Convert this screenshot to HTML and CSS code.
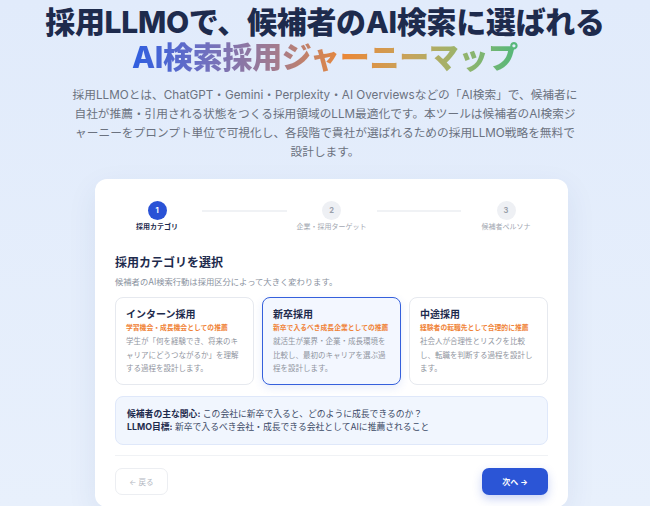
FILE: index.html
```html
<!DOCTYPE html>
<html lang="ja">
<head>
<meta charset="UTF-8">
<meta name="viewport" content="width=device-width, initial-scale=1.0">
<title>AI検索採用ジャーニーマップ</title>
<link rel="stylesheet" href="styles.css">
</head>
<body>
    <div class="hero">
        <h1 class="hero-title">採用LLMOで、候補者のAI検索に選ばれる<br><span class="hero-grad">AI検索採用ジャーニーマップ</span></h1>
        <p class="hero-lead">採用LLMOとは、ChatGPT・Gemini・Perplexity・AI Overviewsなどの「AI検索」で、候補者に自社が推薦・引用される状態をつくる採用領域のLLM最適化です。本ツールは候補者のAI検索ジャーニーをプロンプト単位で可視化し、各段階で貴社が選ばれるための採用LLMO戦略を無料で設計します。</p>
    </div>

    <div class="panel">
        <!-- ステップ表示 -->
        <div class="steps">
            <div class="step active">
                <div class="step-num">1</div>
                <div class="step-label">採用カテゴリ</div>
            </div>
            <div class="step-line"></div>
            <div class="step">
                <div class="step-num">2</div>
                <div class="step-label">企業・採用ターゲット</div>
            </div>
            <div class="step-line"></div>
            <div class="step">
                <div class="step-num">3</div>
                <div class="step-label">候補者ペルソナ</div>
            </div>
        </div>

        <h2 class="sec-title">採用カテゴリを選択</h2>
        <p class="sec-sub">候補者のAI検索行動は採用区分によって大きく変わります。</p>

        <div class="cat-list">
            <div class="cat">
                <div class="cat-name">インターン採用</div>
                <div class="cat-tag">学習機会・成長機会としての推薦</div>
                <div class="cat-desc">学生が「何を経験でき、将来のキャリアにどうつながるか」を理解する過程を設計します。</div>
            </div>
            <div class="cat selected">
                <div class="cat-name">新卒採用</div>
                <div class="cat-tag">新卒で入るべき成長企業としての推薦</div>
                <div class="cat-desc">就活生が業界・企業・成長環境を比較し、最初のキャリアを選ぶ過程を設計します。</div>
            </div>
            <div class="cat">
                <div class="cat-name">中途採用</div>
                <div class="cat-tag">経験者の転職先として合理的に推薦</div>
                <div class="cat-desc">社会人が合理性とリスクを比較し、転職を判断する過程を設計します。</div>
            </div>
        </div>

        <div class="info">
            <div><b>候補者の主な関心:</b> この会社に新卒で入ると、どのように成長できるのか？</div>
            <div><b>LLMO目標:</b> 新卒で入るべき会社・成長できる会社としてAIに推薦されること</div>
        </div>

        <div class="actions">
            <button class="btn-back">← 戻る</button>
            <button class="btn-next">次へ →</button>
        </div>
    </div>
</body>
</html>
```

FILE: styles.css
```css
body{
    margin: 0;
    background: linear-gradient(180deg, #e1ebfb, #e8f0fc);
    font-family: Inter, "Noto Sans CJK JP", sans-serif;
    color: #1e2b4d;
}

.hero{
    text-align: center;
    padding-top: 5px;
}
.hero-title{
    margin: 0;
    font-size: 30px;
    line-height: 35px;
    font-weight: 800;
    letter-spacing: -0.3px;
    color: #1e2b4d;
}
.hero-grad{
    background: linear-gradient(90deg, #2f5ee0 0%, #6d6fc2 18%, #a57c8c 38%, #ea8838 55%, #c6a45c 72%, #9db36a 84%, #52b87a 100%);
    -webkit-background-clip: text;
    background-clip: text;
    color: transparent;
}
.hero-lead{
    width: 509px;
    margin: 11px auto 0;
    font-size: 11.7px;
    line-height: 19px;
    color: #6b7280;
}

.panel{
    width: 433px;
    margin: 17px 0 0 95px;
    padding: 22px 20px 12px;
    background: #fff;
    border-radius: 12px;
    box-shadow: 0 10px 30px rgba(40, 70, 130, 0.08);
}

/* steps */
.steps{
    display: flex;
    align-items: flex-start;
}
.step{
    width: 84px;
    display: flex;
    flex-direction: column;
    align-items: center;
}
.step-num{
    width: 19px;
    height: 19px;
    border-radius: 50%;
    background: #eef0f4;
    color: #9aa0ab;
    font-size: 7.5px;
    font-weight: 700;
    display: flex;
    align-items: center;
    justify-content: center;
}
.step-label{
    margin-top: 2px;
    font-size: 7px;
    line-height: 10px;
    color: #a3a8b2;
}
.step.active .step-num{
    background: #2a52d6;
    color: #fff;
}
.step.active .step-label{
    color: #1e2b4d;
    font-weight: 700;
}
.step-line{
    flex: 1;
    height: 2px;
    margin: 9px 3px 0;
    background: #f0f2f5;
}

.sec-title{
    margin: 23px 0 0;
    font-size: 12px;
    line-height: 16px;
    font-weight: 700;
}
.sec-sub{
    margin: 5px 0 0;
    font-size: 8.3px;
    line-height: 12px;
    color: #8a92a0;
}

/* categories */
.cat-list{
    display: grid;
    grid-template-columns: repeat(3, 1fr);
    gap: 8px;
    margin-top: 9px;
}
.cat{
    padding: 9px 10px 8px;
    border: 1px solid #e6e9ef;
    border-radius: 8px;
    background: #fff;
}
.cat.selected{
    border: 1.5px solid #3560dc;
    background: #f3f7ff;
    box-shadow: 0 3px 8px rgba(53, 96, 220, 0.12);
}
.cat-name{
    font-size: 10px;
    line-height: 14px;
    font-weight: 700;
}
.cat-tag{
    margin-top: 2px;
    font-size: 6.8px;
    line-height: 10px;
    font-weight: 700;
    color: #f08338;
}
.cat-desc{
    margin-top: 2px;
    font-size: 7.5px;
    line-height: 13.5px;
    color: #8f949e;
}

.info{
    margin-top: 11px;
    padding: 10px 11px;
    background: #f1f6fe;
    border: 1px solid #dfe8fa;
    border-radius: 8px;
    font-size: 8.8px;
    line-height: 13.5px;
    color: #3d4a66;
}
.info b{
    color: #1e2b4d;
}

.actions{
    display: flex;
    justify-content: space-between;
    margin-top: 10px;
    padding-top: 12px;
    border-top: 1px solid #f0f2f5;
}
.btn-back, .btn-next{
    height: 27px;
    border-radius: 7px;
    font-family: inherit;
    font-size: 7.5px;
}
.btn-back{
    width: 53px;
    background: #fff;
    border: 1px solid #eceef2;
    color: #b3b8c2;
}
.btn-next{
    width: 66px;
    background: #2b55d6;
    border: none;
    color: #fff;
    font-weight: 700;
    font-size: 8px;
    box-shadow: 0 4px 10px rgba(43, 85, 214, 0.25);
}
```
